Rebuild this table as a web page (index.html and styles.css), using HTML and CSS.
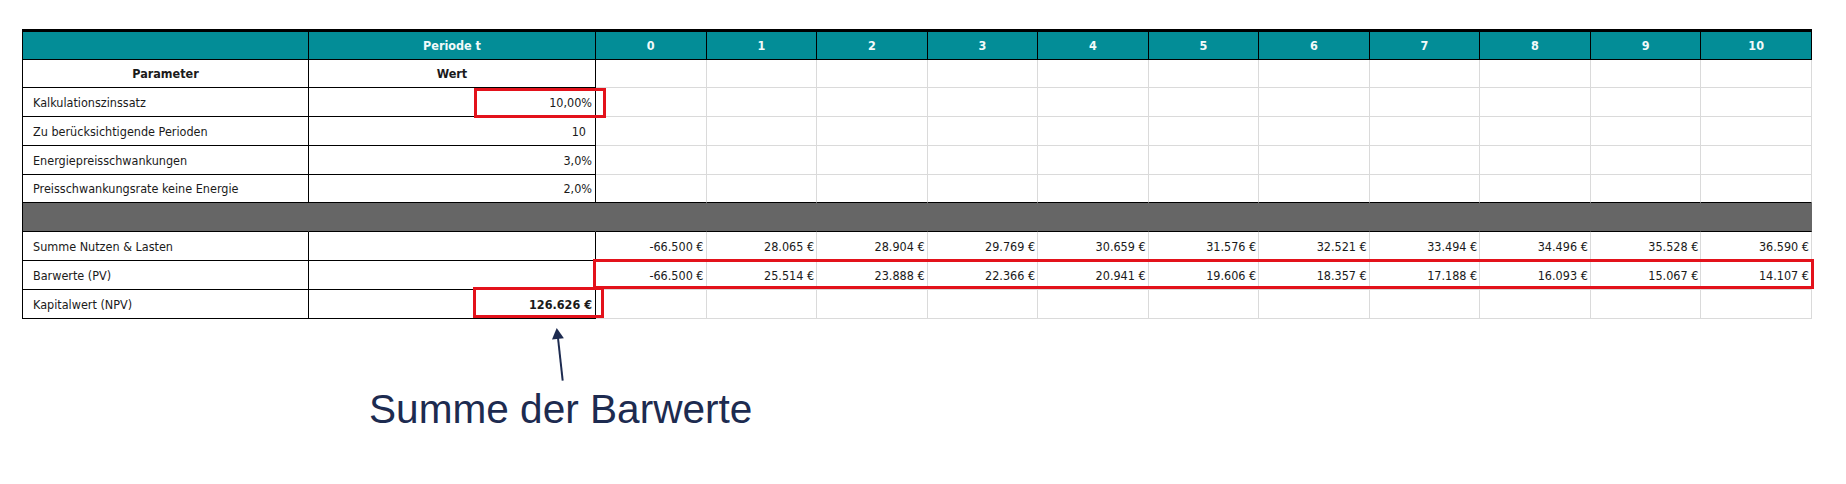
FILE: index.html
```html
<!DOCTYPE html>
<html lang="de">
<head>
<meta charset="utf-8">
<title>Kapitalwert</title>
<link rel="stylesheet" href="styles.css">
</head>
<body>
<div class="page">
  <div class="sheet">
    <table class="grid">
      <colgroup>
        <col class="c-key"><col class="c-val">
        <col><col><col><col><col><col><col><col><col><col><col>
      </colgroup>
      <thead>
        <tr class="head">
          <th class="first"></th><th>Periode t</th>
          <th>0</th><th>1</th><th>2</th><th>3</th><th>4</th><th>5</th><th>6</th><th>7</th><th>8</th><th>9</th><th>10</th>
        </tr>
      </thead>
      <tbody>
        <tr class="r28">
          <td class="k center b">Parameter</td><td class="v center b">Wert</td>
          <td class="p"></td><td class="p"></td><td class="p"></td><td class="p"></td><td class="p"></td><td class="p"></td><td class="p"></td><td class="p"></td><td class="p"></td><td class="p"></td><td class="p"></td>
        </tr>
        <tr>
          <td class="k">Kalkulationszinssatz</td><td class="v">10,00%</td>
          <td class="p"></td><td class="p"></td><td class="p"></td><td class="p"></td><td class="p"></td><td class="p"></td><td class="p"></td><td class="p"></td><td class="p"></td><td class="p"></td><td class="p"></td>
        </tr>
        <tr>
          <td class="k">Zu berücksichtigende Perioden</td><td class="v"><span class="num-pad">10</span></td>
          <td class="p"></td><td class="p"></td><td class="p"></td><td class="p"></td><td class="p"></td><td class="p"></td><td class="p"></td><td class="p"></td><td class="p"></td><td class="p"></td><td class="p"></td>
        </tr>
        <tr>
          <td class="k">Energiepreisschwankungen</td><td class="v">3,0%</td>
          <td class="p"></td><td class="p"></td><td class="p"></td><td class="p"></td><td class="p"></td><td class="p"></td><td class="p"></td><td class="p"></td><td class="p"></td><td class="p"></td><td class="p"></td>
        </tr>
        <tr class="r28 before-band">
          <td class="k">Preisschwankungsrate keine Energie</td><td class="v">2,0%</td>
          <td class="p"></td><td class="p"></td><td class="p"></td><td class="p"></td><td class="p"></td><td class="p"></td><td class="p"></td><td class="p"></td><td class="p"></td><td class="p"></td><td class="p"></td>
        </tr>
        <tr class="band">
          <td class="first"></td><td></td>
          <td></td><td></td><td></td><td></td><td></td><td></td><td></td><td></td><td></td><td></td><td></td>
        </tr>
        <tr>
          <td class="k">Summe Nutzen &amp; Lasten</td><td class="v"></td>
          <td class="p">-66.500 €</td><td class="p">28.065 €</td><td class="p">28.904 €</td><td class="p">29.769 €</td><td class="p">30.659 €</td><td class="p">31.576 €</td><td class="p">32.521 €</td><td class="p">33.494 €</td><td class="p">34.496 €</td><td class="p">35.528 €</td><td class="p">36.590 €</td>
        </tr>
        <tr>
          <td class="k">Barwerte (PV)</td><td class="v"></td>
          <td class="p">-66.500 €</td><td class="p">25.514 €</td><td class="p">23.888 €</td><td class="p">22.366 €</td><td class="p">20.941 €</td><td class="p">19.606 €</td><td class="p">18.357 €</td><td class="p">17.188 €</td><td class="p">16.093 €</td><td class="p">15.067 €</td><td class="p">14.107 €</td>
        </tr>
        <tr>
          <td class="k">Kapitalwert (NPV)</td><td class="v b">126.626 €</td>
          <td class="p"></td><td class="p"></td><td class="p"></td><td class="p"></td><td class="p"></td><td class="p"></td><td class="p"></td><td class="p"></td><td class="p"></td><td class="p"></td><td class="p"></td>
        </tr>
      </tbody>
    </table>
    <div class="mark mark-rate"></div>
    <div class="mark mark-pv"></div>
    <div class="mark mark-npv"></div>
  </div>
  <div class="note">
    <svg class="arrow" width="20" height="56" viewBox="0 0 20 56">
      <line x1="14.7" y1="54.7" x2="10" y2="12" stroke="#1d2b50" stroke-width="2"/>
      <polygon points="8.7,2 15.9,12.3 4,13.6" fill="#1d2b50"/>
    </svg>
    <p class="note-text">Summe der Barwerte</p>
  </div>
</div>
</body>
</html>
```

FILE: styles.css
```css
html, body {
  margin: 0;
  padding: 0;
  background: #ffffff;
}

.page {
  padding: 29px 0 0 22px;
}

.sheet {
  position: relative;
  width: 1790px;
}

.grid {
  table-layout: fixed;
  width: 1790px;
  border-collapse: separate;
  border-spacing: 0;
  font-family: "DejaVu Sans Condensed", "DejaVu Sans", sans-serif;
  font-stretch: condensed;
  font-size: 12.5px;
  color: #1a1a1a;
}

.c-key { width: 287px; }
.c-val { width: 287px; }

.grid th,
.grid td {
  box-sizing: border-box;
  padding: 0 3px 0 10px;
  white-space: nowrap;
  overflow: hidden;
}

.head { height: 31px; }
.grid tbody tr { height: 29px; }
.grid tbody tr.r28 { height: 28px; }

.grid th {
  background: #038d97;
  color: #f2fafa;
  font-weight: bold;
  text-align: center;
  padding: 0;
  border-top: 3px solid #000;
  border-right: 1px solid #000;
  border-bottom: 1px solid #000;
}

.grid th.first { border-left: 1px solid #000; }

.k {
  text-align: left;
  border-left: 1px solid #000;
  border-right: 1px solid #000;
  border-bottom: 1px solid #000;
}

.v {
  text-align: right;
  border-right: 1px solid #000;
  border-bottom: 1px solid #000;
}

.p {
  text-align: right;
  border-right: 1px solid #dadada;
  border-bottom: 1px solid #dadada;
  padding-right: 2px !important;
}

.center { text-align: center; padding-left: 0 !important; padding-right: 0 !important; }
.b { font-weight: bold; }

.num-pad { padding-right: 6px; }

.before-band td { border-bottom-color: #000; }

.band td {
  background: #666666;
  border-bottom: 1px solid #000;
  border-right: 1px solid #666666;
}
.band td.first { border-left: 1px solid #000; }

.mark {
  position: absolute;
  box-sizing: border-box;
  border: 3px solid #e3121b;
}

.mark-rate { left: 452px; top: 59px; width: 132px; height: 30px; }
.mark-npv  { left: 451px; top: 258px; width: 131px; height: 31px; }
.mark-pv   { left: 571px; top: 230px; width: 1221px; height: 30px; }

.note {
  margin-left: -22px;
}

.arrow {
  display: block;
  margin: 7px 0 0 548px;
}

.note-text {
  margin: 4px 0 0 369px;
  font-family: "Liberation Sans", Arial, sans-serif;
  font-size: 40.6px;
  line-height: 46px;
  color: #1d2b50;
}
```
